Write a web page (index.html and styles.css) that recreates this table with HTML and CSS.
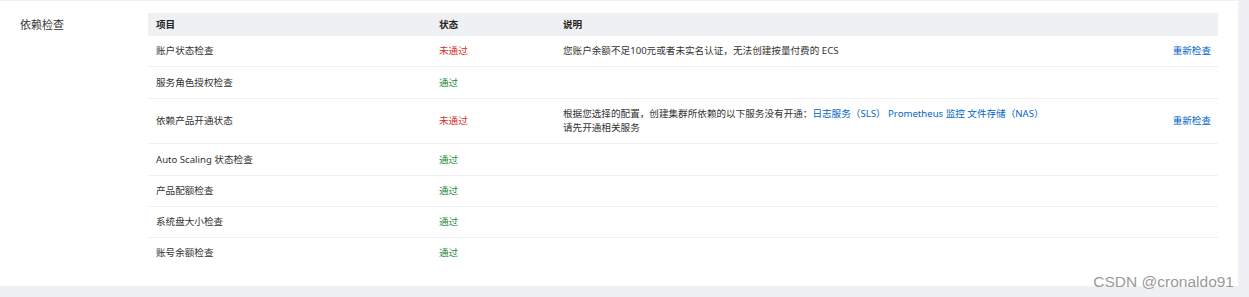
FILE: index.html
```html
<!DOCTYPE html>
<html lang="zh-CN">
<head>
<meta charset="utf-8">
<title>依赖检查</title>
<link rel="stylesheet" href="styles.css">
</head>
<body>
<div class="page">
  <section class="card">
    <div class="label">依赖检查</div>
    <table class="checks">
      <colgroup>
        <col class="c-item"><col class="c-status"><col><col class="c-action">
      </colgroup>
      <thead>
        <tr><th>项目</th><th>状态</th><th>说明</th><th></th></tr>
      </thead>
      <tbody>
        <tr>
          <td>账户状态检查</td>
          <td class="fail">未通过</td>
          <td>您账户余额不足100元或者未实名认证，无法创建按量付费的 ECS</td>
          <td class="action"><a>重新检查</a></td>
        </tr>
        <tr class="tall">
          <td>服务角色授权检查</td>
          <td class="pass">通过</td>
          <td></td><td></td>
        </tr>
        <tr>
          <td>依赖产品开通状态</td>
          <td class="fail">未通过</td>
          <td>根据您选择的配置，创建集群所依赖的以下服务没有开通：<a class="link">日志服务（SLS）</a> <a class="link">Prometheus 监控</a> <a class="link">文件存储（NAS）</a><br>请先开通相关服务</td>
          <td class="action"><a>重新检查</a></td>
        </tr>
        <tr class="tall">
          <td>Auto Scaling 状态检查</td>
          <td class="pass">通过</td>
          <td></td><td></td>
        </tr>
        <tr>
          <td>产品配额检查</td>
          <td class="pass">通过</td>
          <td></td><td></td>
        </tr>
        <tr>
          <td>系统盘大小检查</td>
          <td class="pass">通过</td>
          <td></td><td></td>
        </tr>
        <tr>
          <td>账号余额检查</td>
          <td class="pass">通过</td>
          <td></td><td></td>
        </tr>
      </tbody>
    </table>
  </section>
  <div class="watermark">CSDN @cronaldo91</div>
</div>
</body>
</html>
```
FILE: styles.css
```css
html, body {
  margin: 0;
  padding: 0;
  background: #eff0f4;
}
body {
  font-family: "Noto Sans", "Noto Sans CJK SC", sans-serif;
  color: #333;
}
.page {
  position: relative;
  width: 1249px;
  height: 297px;
  padding-top: 1px;
  box-sizing: border-box;
}
.card {
  display: flex;
  width: 1238px;
  box-sizing: border-box;
  background: #fff;
  padding: 12px 20px 18px 20px;
}
.label {
  width: 128px;
  flex: none;
  font-size: 11px;
  line-height: 23px;
  color: #333;
}
.checks {
  flex: 1;
  border-collapse: collapse;
  font-size: 9.6px;
  table-layout: fixed;
}
.c-item { width: 283px; }
.c-status { width: 124px; }
.c-action { width: 70px; }
.checks th {
  background: #eff0f3;
  font-weight: bold;
  text-align: left;
  height: 23px;
  padding: 0 8px;
  line-height: 14px;
  color: #222;
}
.checks td {
  padding: 8px 8px;
  line-height: 14px;
  vertical-align: middle;
  border-bottom: 1px solid #f0f0f2;
}
.checks tr.tall td { padding-top: 9px; }
.checks tbody tr:last-child td { border-bottom: none; }
.fail { color: #d93026; }
.pass { color: #1e8a3c; }
.link { color: #0064c8; }
.action {
  text-align: right;
  padding-right: 7px !important;
}
.action a {
  color: #0064c8;
}
.watermark {
  position: absolute;
  right: 15px;
  top: 273px;
  font-family: "Liberation Sans", sans-serif;
  font-size: 15.5px;
  color: #9a9a9a;
}
```
